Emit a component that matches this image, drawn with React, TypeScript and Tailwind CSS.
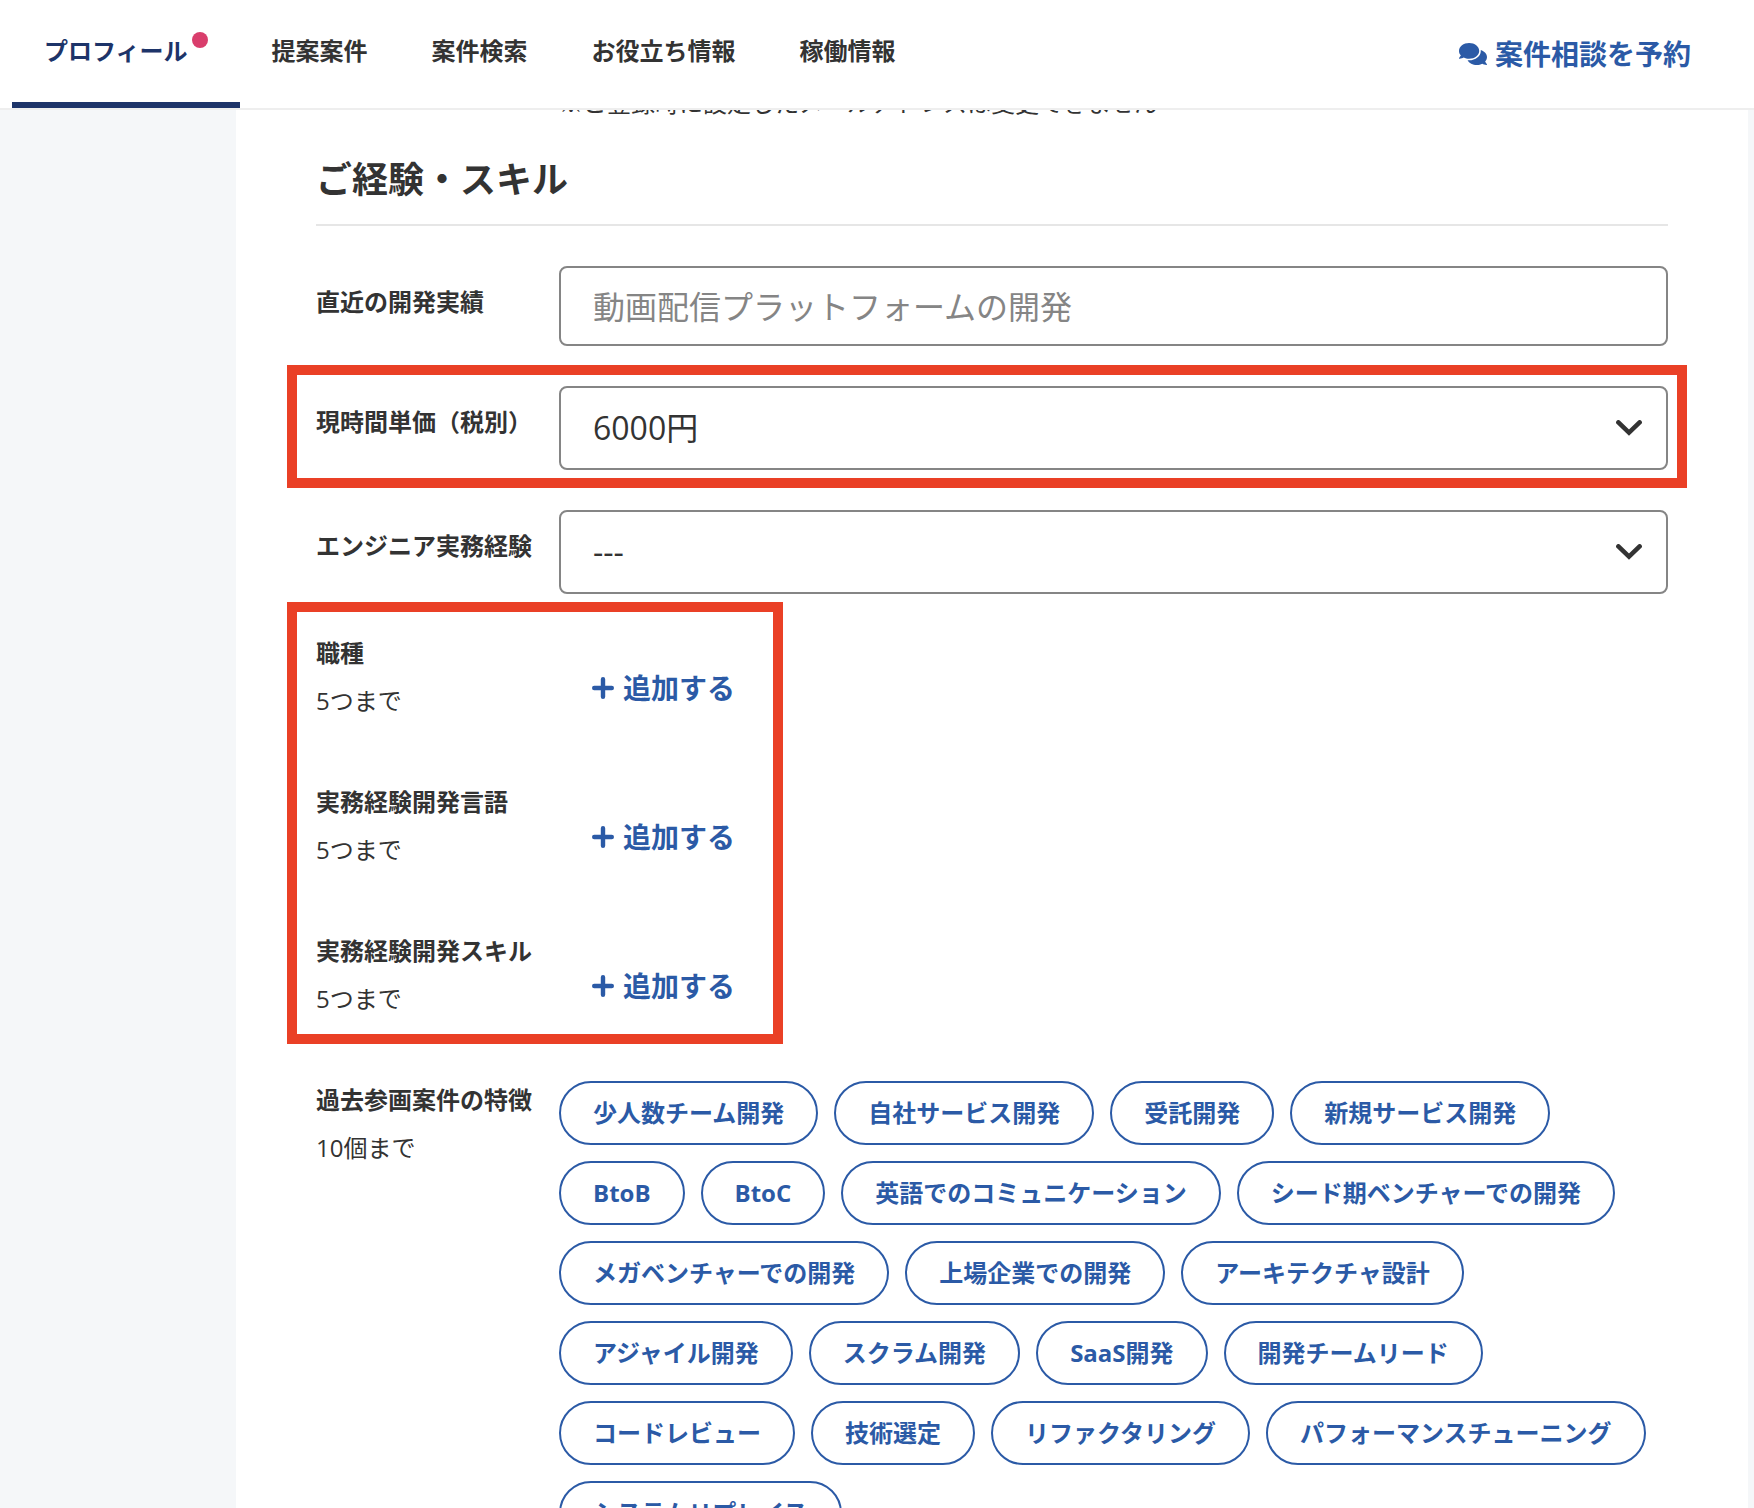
import { useState } from 'react';
import { FaComments } from 'react-icons/fa';

interface AddRow {
  id: string;
  label: string;
}

const tabs = ['プロフィール', '提案案件', '案件検索', 'お役立ち情報', '稼働情報'];

const addRows: AddRow[] = [
  { id: 'job', label: '職種' },
  { id: 'language', label: '実務経験開発言語' },
  { id: 'skill', label: '実務経験開発スキル' },
];

const features = [
  '少人数チーム開発',
  '自社サービス開発',
  '受託開発',
  '新規サービス開発',
  'BtoB',
  'BtoC',
  '英語でのコミュニケーション',
  'シード期ベンチャーでの開発',
  'メガベンチャーでの開発',
  '上場企業での開発',
  'アーキテクチャ設計',
  'アジャイル開発',
  'スクラム開発',
  'SaaS開発',
  '開発チームリード',
  'コードレビュー',
  '技術選定',
  'リファクタリング',
  'パフォーマンスチューニング',
  'システムリプレイス',
];

function Header() {
  return (
    <header className="sticky top-0 z-10 flex h-[110px] justify-between border-b-2 border-[#eeeeee] bg-white pr-[63px] pl-3">
      <nav className="flex">
        {tabs.map((tab, i) => (
          <a
            key={tab}
            href="#"
            className={
              i === 0
                ? 'flex items-start gap-1 border-b-6 border-[#1d3469] px-8 pt-8 text-2xl leading-[38px] font-bold text-[#1d3469]'
                : 'flex items-start px-8 pt-8 text-2xl leading-[38px] font-bold text-[#333333]'
            }
          >
            {tab}
            {i === 0 && <span className="size-4 rounded-full bg-[#d93e6c]" />}
          </a>
        ))}
      </nav>
      <a href="#" className="flex items-center gap-2 text-[28px] leading-10 font-bold text-[#2b5aa6]">
        <FaComments className="size-7" />
        案件相談を予約
      </a>
    </header>
  );
}

function PlusIcon() {
  return (
    <svg
      viewBox="0 0 24 24"
      className="size-6"
      stroke="currentColor"
      strokeWidth="4.4"
      strokeLinecap="round"
    >
      <path d="M12 3.2 V20.8 M3.2 12 H20.8" />
    </svg>
  );
}

function SelectField({ id, options }: { id: string; options: string[] }) {
  const [value, setValue] = useState(options[0]);

  return (
    <div className="relative grow">
      <select
        id={id}
        value={value}
        onChange={(e) => setValue(e.target.value)}
        className="block h-[84px] w-full appearance-none rounded-lg border-2 border-[#858585] bg-white px-8 text-[32px] text-[#333333]"
      >
        {options.map((option) => (
          <option key={option}>{option}</option>
        ))}
      </select>
      <svg
        viewBox="0 0 26 16"
        className="pointer-events-none absolute top-[34px] right-[26px] h-4 w-[26px]"
        fill="none"
        stroke="#333333"
        strokeWidth="4.6"
        strokeLinecap="round"
      >
        <path d="M2.4 2.4 L13 12.6 L23.6 2.4" />
      </svg>
    </div>
  );
}

export default function App() {
  const [selected, setSelected] = useState<string[]>([]);

  const toggle = (feature: string) => {
    setSelected(
      selected.includes(feature) ? selected.filter((f) => f !== feature) : [...selected, feature]
    );
  };

  return (
    <div className="min-h-screen bg-[#f5f7f9] font-['Open_Sans','Noto_Sans_CJK_JP',sans-serif] text-[#333333]">
      <Header />
      <main className="mr-[6px] ml-[236px] min-h-screen bg-white px-20 pb-20">
        <div className="-mt-[25px] pl-[243px]">
          <p className="text-2xl leading-9">※ご登録時に設定したメールアドレスは変更できません</p>
        </div>

        <h2 className="mt-8 border-b-2 border-[#e6e6e6] pb-[17px] text-4xl leading-[54px] font-bold">
          ご経験・スキル
        </h2>

        <div className="mt-10 flex">
          <label htmlFor="record" className="w-[243px] shrink-0 pt-[18px] text-2xl leading-9 font-bold">
            直近の開発実績
          </label>
          <input
            id="record"
            type="text"
            placeholder="動画配信プラットフォームの開発"
            className="h-20 min-w-0 grow rounded-lg border-2 border-[#858585] bg-white px-8 text-[32px] placeholder:text-[#858585]"
          />
        </div>

        <div className="relative mt-10 flex">
          <label htmlFor="rate" className="w-[243px] shrink-0 pt-[18px] text-2xl leading-9 font-bold">
            現時間単価（税別）
          </label>
          <SelectField id="rate" options={['6000円', '7000円', '8000円']} />
          <div className="pointer-events-none absolute -top-[21px] -right-[19px] -bottom-[18px] -left-[29px] border-10 border-[#ea4026]" />
        </div>

        <div className="mt-10 flex">
          <label htmlFor="years" className="w-[243px] shrink-0 pt-[18px] text-2xl leading-9 font-bold">
            エンジニア実務経験
          </label>
          <SelectField id="years" options={['---', '1年未満', '1年以上', '3年以上']} />
        </div>

        <div className="relative mt-10 w-fit">
          {addRows.map((row) => (
            <div key={row.id} className="flex h-[149px]">
              <div className="w-[243px] shrink-0 pt-px">
                <p className="text-2xl leading-9 font-bold">{row.label}</p>
                <p className="mt-3 text-2xl leading-9">5つまで</p>
              </div>
              <button
                type="button"
                aria-label={`${row.label}を追加する`}
                className="flex h-20 items-center gap-2 pt-7 pr-12 pl-8 text-[28px] leading-10 font-bold text-[#2b5aa6]"
              >
                <PlusIcon />
                追加する
              </button>
            </div>
          ))}
          <div className="pointer-events-none absolute -top-8 right-0 bottom-[37px] -left-[29px] border-10 border-[#ea4026]" />
        </div>

        <div className="flex">
          <div className="w-[243px] shrink-0 pt-px">
            <p className="text-2xl leading-9 font-bold">過去参画案件の特徴</p>
            <p className="mt-3 text-2xl leading-9">10個まで</p>
          </div>
          <div className="flex flex-wrap gap-4">
            {features.map((feature) => (
              <button
                key={feature}
                type="button"
                aria-pressed={selected.includes(feature)}
                onClick={() => toggle(feature)}
                className="h-16 rounded-full border-2 border-[#2b5aa6] bg-white px-8 text-2xl leading-9 font-bold text-[#2b5aa6]"
              >
                {feature}
              </button>
            ))}
          </div>
        </div>
      </main>
    </div>
  );
}
